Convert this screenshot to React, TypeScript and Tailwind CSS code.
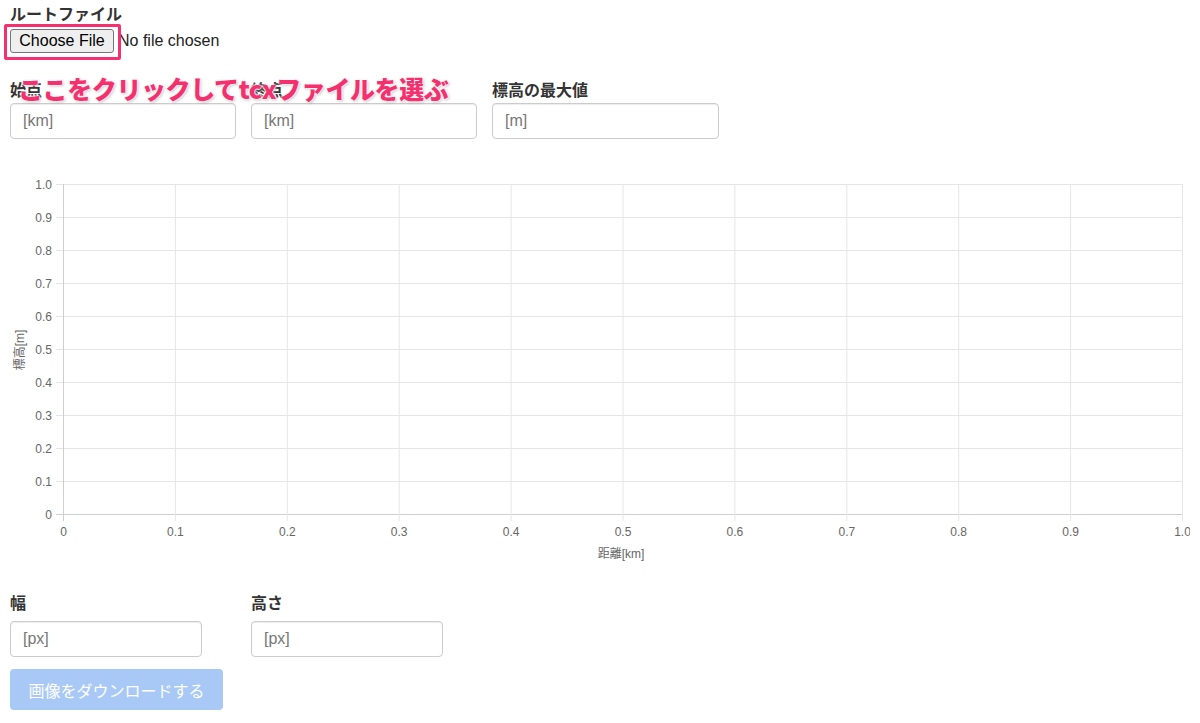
import React from 'react';

const yTicks = ['1.0', '0.9', '0.8', '0.7', '0.6', '0.5', '0.4', '0.3', '0.2', '0.1', '0'];
const xTicks = ['0', '0.1', '0.2', '0.3', '0.4', '0.5', '0.6', '0.7', '0.8', '0.9', '1.0'];

// plot area inside svg coords (svg starts at page x=10, y=160)
const L = 53;
const R = 1172;
const T = 24;
const B = 354;

function Chart() {
  const stepY = (B - T) / 10;
  const stepX = (R - L) / 10;
  return (
    <svg width={1180} height={410} className="block" style={{ fontFamily: '"Liberation Sans", Arial, sans-serif' }}>
      {yTicks.map((t, i) => {
        const y = T + i * stepY + 0.5;
        return (
          <g key={'y' + t}>
            <line x1={L - 7} x2={R} y1={y} y2={y} stroke={i === 10 ? '#cfcfcf' : '#e6e6e6'} strokeWidth={1} />
            <text x={L - 11} y={y + 4} textAnchor="end" fontSize={12} fill="#666">
              {t}
            </text>
          </g>
        );
      })}
      {xTicks.map((t, i) => {
        const x = L + i * stepX + 0.5;
        return (
          <g key={'x' + t}>
            <line x1={x} x2={x} y1={T} y2={B + 7} stroke={i === 0 ? '#cfcfcf' : '#e6e6e6'} strokeWidth={1} />
            <text x={x} y={B + 22} textAnchor="middle" fontSize={12} fill="#666">
              {t}
            </text>
          </g>
        );
      })}
      <text x={611} y={398} textAnchor="middle" fontSize={12} fill="#666" style={{ fontFamily: '"Liberation Sans", "Noto Sans CJK JP", sans-serif' }}>
        距離[km]
      </text>
      <text
        transform="translate(14 190) rotate(-90)"
        textAnchor="middle"
        fontSize={12}
        fill="#666"
        style={{ fontFamily: '"Liberation Sans", "Noto Sans CJK JP", sans-serif' }}
      >
        標高[m]
      </text>
    </svg>
  );
}

function Field({ label, placeholder, w, gap = 'mt-[4px]' }: { label: string; placeholder: string; w: string; gap?: string }) {
  return (
    <div className={'flex flex-col ' + w}>
      <label className="h-[20px] text-[16px] font-bold leading-[20px] text-[#333]">{label}</label>
      <input
        placeholder={placeholder}
        className={gap + ' h-[36px] w-full rounded-[4px] border border-[#ccc] px-[12px] text-[16px] text-[#555] shadow-[inset_0_1px_1px_rgba(0,0,0,0.075)] outline-none placeholder:text-[#777]'}
        style={{ fontFamily: '"Liberation Sans", Arial, sans-serif' }}
      />
    </div>
  );
}

export default function App() {
  return (
    <div className="relative min-h-[723px] w-[1200px] bg-white px-[10px] pt-[3px]" style={{ fontFamily: '"Noto Sans CJK JP", "Liberation Sans", sans-serif' }}>
      <div className="h-[20px] text-[16px] font-bold leading-[20px] text-[#333]">ルートファイル</div>
      <div className="mt-[6px] flex items-center gap-[4px]" style={{ fontFamily: '"Liberation Sans", Arial, sans-serif' }}>
        <button className="h-[24px] w-[104px] rounded-[3px] border border-[#767676] bg-[#efefef] text-[16px] leading-[20px] text-black">
          Choose File
        </button>
        <span className="text-[16px] text-[#222]">No file chosen</span>
      </div>

      <div className="mt-[26px] flex gap-[15px]">
        <Field label="始点" placeholder="[km]" w="w-[226px]" />
        <Field label="終点" placeholder="[km]" w="w-[226px]" />
        <Field label="標高の最大値" placeholder="[m]" w="w-[227px]" />
      </div>

      <div className="mt-[21px]">
        <Chart />
      </div>

      <div className="mt-[22px] flex gap-[49px]">
        <Field label="幅" placeholder="[px]" w="w-[192px]" gap="mt-[9px]" />
        <Field label="高さ" placeholder="[px]" w="w-[192px]" gap="mt-[9px]" />
      </div>

      <button className="mt-[12px] h-[41px] w-[213px] rounded-[4px] bg-[#a8c9f5] text-[16px] text-white">
        画像をダウンロードする
      </button>

      {/* annotation overlay */}
      <div className="absolute left-[4px] top-[24px] h-[36px] w-[117px] rounded-[2px] border-[3px] border-[#f5306e]" />
      <div
        className="absolute left-[18px] top-[71px] whitespace-nowrap text-[25px] font-black leading-[34px] tracking-[-0.4px] text-[#f5306e] [text-shadow:0_0_2px_#fff,0_0_2px_#fff,0_0_3px_#fff,1px_1px_3px_rgba(0,0,0,0.35)]"
        style={{ fontFamily: '"Noto Sans CJK JP", sans-serif' }}
      >
        ここをクリックしてtcxファイルを選ぶ
      </div>
    </div>
  );
}
